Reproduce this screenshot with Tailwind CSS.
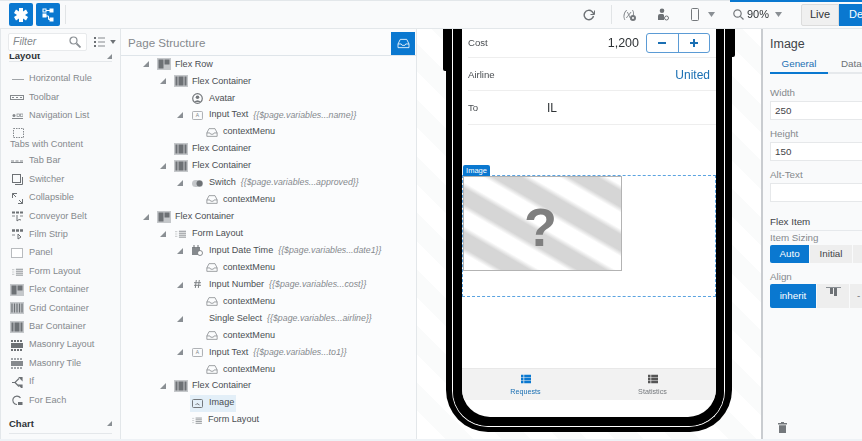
<!DOCTYPE html>
<html lang="en">
<head>
<meta charset="UTF-8">
<title>Page Designer</title>
<script src="https://cdn.jsdelivr.net/npm/@tailwindcss/browser@4"></script>
</head>
<body class="bg-[#eef2f6]">
<svg class="hidden">
  <symbol id="arrow" viewBox="0 0 7 7"><polygon points="7,0 7,7 0,7" fill="#8a8f94"/></symbol>
  <symbol id="flex" viewBox="0 0 14 12"><rect width="14" height="12" fill="#c4c7ca"/><rect x="1.5" y="1.5" width="5" height="9" fill="#6d7175"/><rect x="7.5" y="1.5" width="5" height="5" fill="#6d7175"/></symbol>
  <symbol id="bar" viewBox="0 0 14 12"><rect width="14" height="12" fill="#c4c7ca"/><rect x="1.5" y="1.5" width="2" height="9" fill="#6d7175"/><rect x="4.5" y="1.5" width="5" height="9" fill="#6d7175"/><rect x="10.5" y="1.5" width="2" height="9" fill="#6d7175"/></symbol>
  <symbol id="grid" viewBox="0 0 14 12"><rect width="14" height="12" fill="#c4c7ca"/><path d="M2 1.5v9M4.5 1.5v9M7 1.5v9M9.5 1.5v9M12 1.5v9" stroke="#6d7175" stroke-width="1.2"/></symbol>
  <symbol id="inbox" viewBox="0 0 14 12"><path d="M1 6.500 3.500 1.500h7L13 6.500v4H1zM1 6.500h3.500l1 1.500h3l1-1.500H13" fill="none" stroke="currentColor" stroke-width="0.9"/></symbol>
  <symbol id="form" viewBox="0 0 14 10"><path d="M0 2h3M0 5h3M0 8h3" stroke="#d0d2d4" stroke-width="1.4"/><path d="M5 1.500h9M5 4h9M5 6.500h9M5 9h9" stroke="#85898d" stroke-width="1.2"/></symbol>
  <symbol id="input" viewBox="0 0 12 10"><rect x="0.500" y="0.500" width="11" height="9" rx="1" fill="none" stroke="#a0a4a8"/><text x="6" y="7" font-size="5.500" text-anchor="middle" fill="#808488" font-family="Liberation Sans">A</text></symbol>
  <symbol id="list" viewBox="0 0 14 12"><path fill="currentColor" d="M0 0h3.500v3.500H0zM4.500 0H14v3.500H4.500zM0 4.300h3.500v3.500H0zM4.500 4.300H14v3.500H4.500zM0 8.600h3.500V12H0zM4.500 8.600H14V12H4.500z"/></symbol>
</svg>

<div class="w-[862px] h-[441px] overflow-hidden flex flex-col font-['Liberation_Sans',sans-serif] text-[#3f4347] blur-[0.35px]">
  <!-- toolbar -->
  <header class="relative h-[29px] shrink-0 flex items-center bg-[#f9fafb] border-t border-b border-[#e3e7ea] pl-[9px] [&>*]:shrink-0">
    <div class="absolute right-0 -top-px w-[132px] h-[2px] bg-[#0a78d0]"></div>
    <button class="w-[24px] h-[23px] bg-[#0a78d0] rounded-[2px] flex items-center justify-center">
      <svg class="w-[14px] h-[14px]" viewBox="0 0 14 14"><path fill="#fff" d="M5 0h4v3.500L12 1.500l2 3.500-3 2 3 2-2 3.500-3-2V14H5v-3.500L2 12.500 0 9l3-2-3-2 2-3.500 3 2z"/></svg>
    </button>
    <button class="ml-[3px] w-[24px] h-[23px] bg-[#0a78d0] rounded-[2px] flex items-center justify-center">
      <svg class="w-[13px] h-[14px]" viewBox="0 0 13 14" fill="none" stroke="#fff"><rect x="1" y="1" width="3" height="3"/><rect x="8" y="1" width="3" height="3" fill="#fff"/><rect x="1" y="6" width="3" height="3" fill="#fff"/><rect x="8" y="10" width="3" height="3" fill="#fff"/><path d="M4 8h2.500v3.500H8M4 2.500h4"/></svg>
    </button>
    <div class="ml-[5px] w-px h-[19px] bg-[#e1e4e6]"></div>

    <svg class="ml-[517px] w-[12px] h-[12px]" viewBox="0 0 12 12" fill="none" stroke="#6d7175" stroke-width="1.4"><path d="M10.500 7A4.700 4.700 0 1 1 9 2.500L11 5"/><path d="M11.500 1.500V5.500H7.500" stroke-width="1"/></svg>
    <div class="ml-[16px] w-px h-[19px] bg-[#e1e4e6]"></div>
    <span class="relative ml-[11px] w-[13px] text-[10px] italic text-[#85898d] leading-none">(x)<span class="absolute left-[7px] top-[5px] w-[6px] h-[6px] rounded-full border-2 border-[#74787c] bg-white"></span></span>
    <svg class="ml-[21px] w-[12px] h-[13px]" viewBox="0 0 12 13"><circle cx="5" cy="2.800" r="2.300" fill="#6d7175"/><path d="M1 12V8q0-2 2-2h3l1 1v5z" fill="#6d7175"/><circle cx="9.500" cy="10" r="2" fill="none" stroke="#6d7175"/></svg>
    <svg class="ml-[22px] w-[8px] h-[13px]" viewBox="0 0 8 13" fill="none" stroke="#74787c"><rect x="0.500" y="0.500" width="7" height="12" rx="1"/></svg>
    <svg class="ml-[9px] w-[7px] h-[5px]" viewBox="0 0 7 5"><polygon points="0,0 7,0 3.500,5" fill="#8a8f94"/></svg>
    <svg class="ml-[18px] w-[11px] h-[11px]" viewBox="0 0 11 11" fill="none" stroke="#74787c" stroke-width="1.200"><circle cx="4.500" cy="4.500" r="3.700"/><path d="M7.300 7.300 10.500 10.500"/></svg>
    <span class="ml-[3px] text-[11px] text-[#2f3336]">90%</span>
    <svg class="ml-[6px] w-[7px] h-[5px]" viewBox="0 0 7 5"><polygon points="0,0 7,0 3.500,5" fill="#8a8f94"/></svg>
    <div class="ml-[19px] w-[38px] h-[22px] bg-[#f0f0f0] border border-[#dcdcdc] rounded-l-[2px] flex items-center justify-center text-[11px] text-[#2f3336]">Live</div>
    <div class="w-[60px] h-[22px] bg-[#0a78d0] text-white text-[11px] flex items-center pl-[10px]">Design</div>
  </header>

  <main class="flex-1 min-h-0 flex mb-[2px]">
    <!-- component palette -->
    <aside class="w-[121px] shrink-0 bg-[#f9fafb] border-l border-[#e3e7ea] border-r relative overflow-hidden text-[9.200px] text-[#85898d]">
      <div class="flex items-center pl-[7px] pt-[4px]">
        <div class="w-[79px] h-[18px] bg-white border border-[#e8eaec] rounded-[2px] flex items-center justify-between pl-[4px] pr-[5px]">
          <span class="italic text-[10.500px] text-[#85898d]">Filter</span>
          <svg class="w-[12px] h-[12px]" viewBox="0 0 12 12" fill="none" stroke="#8a8f94" stroke-width="1.200"><circle cx="4.500" cy="4.500" r="3.500"/><path d="M7.500 7.500 11.500 11.500" stroke-width="1.800"/></svg>
        </div>
        <svg class="ml-[7px] w-[11px] h-[10px]" viewBox="0 0 11 10"><path d="M0 1h2M0 5h2M0 9h2" stroke="#6d7175" stroke-width="1.800"/><path d="M4 1h7M4 5h7M4 9h7" stroke="#85898d"/></svg>
        <svg class="ml-[5px] w-[6px] h-[4px]" viewBox="0 0 7 5"><polygon points="0,0 7,0 3.500,5" fill="#6d7175"/></svg>
      </div>
      <div class="mx-[8px] h-[8px] mt-[3px] border-b border-[#e4e7ea] flex items-end justify-between overflow-hidden">
        <span class="text-[9.500px] font-bold text-[#2f3336] leading-[8px] h-[8px] -translate-y-[1px]">Layout</span>
        <svg class="w-[5px] h-[5px] mb-[2px]"><use href="#arrow"/></svg>
      </div>
      <ul class="mt-[8px] -ml-px">
        <li class="h-[18.400px] flex items-center pl-[12px]"><span class="w-[17px] flex"><span class="w-[12px] h-px bg-[#a0a4a8]"></span></span>Horizontal Rule</li>
        <li class="h-[18.400px] flex items-center pl-[10px]"><svg class="w-[14px] h-[5px] mr-[5px]" viewBox="0 0 14 5"><rect x="0.500" y="0.500" width="13" height="4" fill="none" stroke="#85898d"/><path d="M2 2.500h2M6 2.500h2M10 2.500h2" stroke="#85898d"/></svg>Toolbar</li>
        <li class="h-[18.400px] flex items-center pl-[12px]"><svg class="w-[11px] h-[6px] mr-[6px]" viewBox="0 0 11 6"><path d="M0 5.500h11" stroke="#85898d"/><circle cx="2" cy="2.500" r="1.500" fill="#85898d"/><rect x="5" y="1" width="2.500" height="2.500" fill="none" stroke="#85898d" stroke-width="0.700"/><rect x="8.500" y="1" width="2.500" height="2.500" fill="none" stroke="#85898d" stroke-width="0.700"/></svg>Navigation List</li>
        <li class="h-[27px] relative">
          <svg class="absolute left-[13px] top-[3px] w-[11px] h-[10px]" viewBox="0 0 11 10"><rect x="0.500" y="0.500" width="10" height="9" fill="none" stroke="#85898d" stroke-dasharray="1.500 1"/></svg>
          <span class="absolute left-[10px] top-[13px]">Tabs with Content</span>
        </li>
        <li class="h-[18.400px] flex items-center pl-[11px]"><svg class="w-[12px] h-[4px] mr-[6px]" viewBox="0 0 12 4"><path d="M0 3.500h12" stroke="#85898d"/><path d="M0 2h3M4.500 2h3M9 2h3" stroke="#85898d"/></svg>Tab Bar</li>
        <li class="h-[18.400px] flex items-center pl-[12px]"><svg class="w-[11px] h-[11px] mr-[6px]" viewBox="0 0 11 11" fill="none" stroke="#6d7175"><rect x="0.500" y="0.500" width="8" height="8"/><path d="M10.500 3v7.500H3"/></svg>Switcher</li>
        <li class="h-[18.400px] flex items-center pl-[12px]"><svg class="w-[11px] h-[11px] mr-[6px]" viewBox="0 0 11 11" fill="none" stroke="#6d7175"><path d="M0.500 5V0.500H5M0.500 0.500 4 4M10.500 6v4.500H6M10.500 10.500 7 7"/></svg>Collapsible</li>
        <li class="h-[18.400px] flex items-center pl-[12px]"><svg class="w-[11px] h-[11px] mr-[6px]" viewBox="0 0 11 11"><path d="M0 1.500h3M4 1.500h3M8 1.500h3" stroke="#6d7175" stroke-width="2"/><path d="M0 5h3M8 5h3" stroke="#85898d"/><path d="M5 4v6l2-1.500 2 .5" fill="none" stroke="#6d7175"/></svg>Conveyor Belt</li>
        <li class="h-[18.400px] flex items-center pl-[12px]"><svg class="w-[11px] h-[11px] mr-[6px]" viewBox="0 0 11 11"><path d="M0 1.500h3M4 1.500h3M8 1.500h3" stroke="#6d7175" stroke-width="2.600"/><path d="M0 6h3" stroke="#85898d"/><path d="M6 5v5l3-2z" fill="none" stroke="#6d7175"/></svg>Film Strip</li>
        <li class="h-[18.400px] flex items-center pl-[11px]"><span class="w-[12px] h-[10px] mr-[6px] border border-[#b8bbbe] bg-white"></span>Panel</li>
        <li class="h-[18.400px] flex items-center pl-[12px]"><svg class="w-[11px] h-[8px] mr-[6px]"><use href="#form"/></svg>Form Layout</li>
        <li class="h-[18.400px] flex items-center pl-[10px]"><svg class="w-[14px] h-[12px] mr-[5px]"><use href="#flex"/></svg>Flex Container</li>
        <li class="h-[18.400px] flex items-center pl-[10px]"><svg class="w-[14px] h-[12px] mr-[5px]"><use href="#grid"/></svg>Grid Container</li>
        <li class="h-[18.400px] flex items-center pl-[10px]"><svg class="w-[14px] h-[12px] mr-[5px]"><use href="#bar"/></svg>Bar Container</li>
        <li class="h-[18.400px] flex items-center pl-[11px]"><svg class="w-[12px] h-[11px] mr-[6px]" viewBox="0 0 12 11"><path d="M0 1h12M0 10h12" stroke="#6d7175" stroke-width="2" stroke-dasharray="2 1"/><rect y="3" width="12" height="5" fill="#6d7175"/></svg>Masonry Layout</li>
        <li class="h-[18.400px] flex items-center pl-[11px]"><svg class="w-[12px] h-[11px] mr-[6px]" viewBox="0 0 12 11"><path d="M0 1h12M0 10h12" stroke="#a0a4a8" stroke-width="2" stroke-dasharray="2 1"/><rect y="3" width="12" height="5" fill="#85898d"/></svg>Masonry Tile</li>
        <li class="h-[18.400px] flex items-center pl-[12px]"><svg class="w-[11px] h-[11px] mr-[6px]" viewBox="0 0 11 11" fill="none" stroke="#6d7175" stroke-width="1.200"><path d="M0 5.500h3l4-4M3 5.500l4 4"/><path d="M7 0h3v3zM7 8h3v3z" fill="#6d7175"/></svg>If</li>
        <li class="h-[18.400px] flex items-center pl-[11px]"><svg class="w-[12px] h-[11px] mr-[6px]" viewBox="0 0 12 11" fill="none" stroke="#6d7175" stroke-width="1.200"><path d="M9.500 3A4.200 4.200 0 1 0 6 9.500"/><rect x="7" y="7" width="4.500" height="3" fill="#6d7175" stroke="none"/></svg>For Each</li>
      </ul>
      <div class="mx-[8px] mt-[7px] pb-[2px] border-b border-[#e4e7ea] flex items-center justify-between">
        <span class="font-bold text-[9.500px] text-[#2f3336]">Chart</span>
        <svg class="w-[5px] h-[5px]"><use href="#arrow"/></svg>
      </div>
    </aside>

    <!-- page structure tree -->
    <section class="w-[296px] shrink-0 bg-[#fbfcfd] border-r border-[#e3e7ea] text-[#4a4e52]">
      <div class="h-[27px] pt-[2px] flex items-center justify-between border-b border-[#dfe5ea] pl-[7px] pr-[1px]">
        <h2 class="text-[11.600px] text-[#85898d] font-normal">Page Structure</h2>
        <button class="w-[24px] h-[23px] bg-[#0a78d0] flex items-center justify-center text-white"><svg class="w-[13px] h-[11px]"><use href="#inbox"/></svg></button>
      </div>
      <ul class="text-[9.100px] [&>li]:h-[16.950px] [&>li]:flex [&>li]:items-center [&_i]:ml-[5px] [&_i]:text-[8.800px] [&_i]:text-[#85898d]">
        <li class="pl-[22px]"><svg class="w-[6px] h-[6px] mr-[8px]"><use href="#arrow"/></svg><svg class="w-[14px] h-[12px] mr-[4px]"><use href="#flex"/></svg>Flex Row</li>
        <li class="pl-[39px]"><svg class="w-[6px] h-[6px] mr-[8px]"><use href="#arrow"/></svg><svg class="w-[14px] h-[12px] mr-[4px]"><use href="#bar"/></svg>Flex Container</li>
        <li class="pl-[71px]"><svg class="w-[11px] h-[11px] mr-[6px]" viewBox="0 0 11 11"><circle cx="5.500" cy="5.500" r="4.800" fill="none" stroke="#74787c" stroke-width="1.200"/><circle cx="5.500" cy="4.200" r="1.800" fill="#74787c"/><path d="M2 9q3.500-3.500 7 0" fill="#74787c"/></svg>Avatar</li>
        <li class="pl-[56px]"><svg class="w-[6px] h-[6px] mr-[9px]"><use href="#arrow"/></svg><svg class="w-[11px] h-[9px] mr-[6px]"><use href="#input"/></svg>Input Text <i>{{$page.variables...name}}</i></li>
        <li class="pl-[85px]"><svg class="w-[12px] h-[11px] mr-[5px] text-[#85898d]"><use href="#inbox"/></svg>contextMenu</li>
        <li class="pl-[53px]"><svg class="w-[14px] h-[12px] mr-[4px]"><use href="#bar"/></svg>Flex Container</li>
        <li class="pl-[39px]"><svg class="w-[6px] h-[6px] mr-[8px]"><use href="#arrow"/></svg><svg class="w-[14px] h-[12px] mr-[4px]"><use href="#bar"/></svg>Flex Container</li>
        <li class="pl-[56px]"><svg class="w-[6px] h-[6px] mr-[9px]"><use href="#arrow"/></svg><svg class="w-[11px] h-[7px] mr-[6px]" viewBox="0 0 11 7"><rect width="11" height="7" rx="3.500" fill="#c4c7ca"/><circle cx="7.500" cy="3.500" r="3" fill="#6d7175"/></svg>Switch <i>{{$page.variables...approved}}</i></li>
        <li class="pl-[85px]"><svg class="w-[12px] h-[11px] mr-[5px] text-[#85898d]"><use href="#inbox"/></svg>contextMenu</li>
        <li class="pl-[22px]"><svg class="w-[6px] h-[6px] mr-[8px]"><use href="#arrow"/></svg><svg class="w-[14px] h-[12px] mr-[4px]"><use href="#flex"/></svg>Flex Container</li>
        <li class="pl-[39px]"><svg class="w-[6px] h-[6px] mr-[9px]"><use href="#arrow"/></svg><svg class="w-[11px] h-[8px] mr-[6px]"><use href="#form"/></svg>Form Layout</li>
        <li class="pl-[56px]"><svg class="w-[6px] h-[6px] mr-[9px]"><use href="#arrow"/></svg><svg class="w-[11px] h-[11px] mr-[6px]" viewBox="0 0 11 11"><rect y="2" width="8" height="8" fill="#85898d"/><path d="M2 0v3M6 0v3" stroke="#6d7175"/><circle cx="8" cy="8" r="2.500" fill="#fff" stroke="#6d7175" stroke-width="0.800"/></svg>Input Date Time <i>{{$page.variables...date1}}</i></li>
        <li class="pl-[85px]"><svg class="w-[12px] h-[11px] mr-[5px] text-[#85898d]"><use href="#inbox"/></svg>contextMenu</li>
        <li class="pl-[56px]"><svg class="w-[6px] h-[6px] mr-[11px]"><use href="#arrow"/></svg><svg class="w-[7px] h-[8px] mr-[8px] -translate-y-[1px]" viewBox="0 0 7 8" fill="none" stroke="#74787c" stroke-width="0.900"><path d="M2.300 0 1.300 8M5.300 0l-1 8M0 2.700h7M0 5.300h7"/></svg>Input Number <i>{{$page.variables...cost}}</i></li>
        <li class="pl-[85px]"><svg class="w-[12px] h-[11px] mr-[5px] text-[#85898d]"><use href="#inbox"/></svg>contextMenu</li>
        <li class="pl-[56px]"><svg class="w-[6px] h-[6px] mr-[26px]"><use href="#arrow"/></svg>Single Select <i>{{$page.variables...airline}}</i></li>
        <li class="pl-[85px]"><svg class="w-[12px] h-[11px] mr-[5px] text-[#85898d]"><use href="#inbox"/></svg>contextMenu</li>
        <li class="pl-[56px]"><svg class="w-[6px] h-[6px] mr-[9px]"><use href="#arrow"/></svg><svg class="w-[11px] h-[9px] mr-[6px]"><use href="#input"/></svg>Input Text <i>{{$page.variables...to1}}</i></li>
        <li class="pl-[85px]"><svg class="w-[12px] h-[11px] mr-[5px] text-[#85898d]"><use href="#inbox"/></svg>contextMenu</li>
        <li class="pl-[39px]"><svg class="w-[6px] h-[6px] mr-[8px]"><use href="#arrow"/></svg><svg class="w-[14px] h-[12px] mr-[4px]"><use href="#bar"/></svg>Flex Container</li>
        <li class="pl-[69px]"><span class="flex items-center h-[17px] w-[46px] bg-[#e3eff8] pl-[2px]"><svg class="w-[11px] h-[9px] mr-[6px]" viewBox="0 0 11 9" fill="none" stroke="#74787c"><rect x="0.500" y="0.500" width="10" height="8" rx="1"/><path d="M3.500 6 5 4.500 7.500 6"/></svg>Image</span></li>
        <li class="pl-[71px]"><svg class="w-[10px] h-[7px] mr-[6px]"><use href="#form"/></svg>Form Layout</li>
      </ul>
    </section>

    <!-- canvas with the phone frame -->
    <section class="flex-1 min-w-0 relative overflow-hidden bg-[repeating-linear-gradient(45deg,#ffffff_0,#ffffff_20px,#fafbfb_20px,#fafbfb_40px)] pl-[29px]">
      <span class="absolute left-[26px] top-0 w-[4px] h-[42px] bg-black rounded-bl-[2px]"></span>
      <span class="absolute left-[314px] top-0 w-[4px] h-[28px] bg-black rounded-br-[2px]"></span>
      <div class="w-[286px] h-[403px] bg-black rounded-b-[42px] pl-[6px] pr-[7px] pb-[5px]">
        <div class="h-full border-x border-b border-white rounded-b-[36px]">
          <div class="h-full bg-black pl-[9px] pr-[8px] pb-[9px] rounded-b-[35px]">
            <div class="relative h-full bg-white rounded-b-[28px] flex flex-col overflow-hidden text-[9.600px] text-[#4a4e52]">
              <div class="h-[29px] ml-[6px] flex items-center border-b border-[#eeeeee] pr-[6px] shrink-0">
                <span class="mt-[1px]">Cost</span>
                <span class="ml-auto text-[12.500px] text-[#2f3336]">1,200</span>
                <div class="ml-[7px] w-[64px] h-[20px] flex border border-[#5b9bd5] rounded-[3px] text-[#1a6fb3]">
                  <span class="flex-1 border-r border-[#5b9bd5] flex items-center justify-center"><span class="w-[8px] h-[1.500px] bg-[#1a6fb3]"></span></span>
                  <span class="flex-1 relative flex items-center justify-center"><span class="w-[8px] h-[1.500px] bg-[#1a6fb3]"></span><span class="absolute w-[1.500px] h-[8px] bg-[#1a6fb3]"></span></span>
                </div>
              </div>
              <div class="h-[33px] ml-[6px] pt-[1px] flex items-center justify-between border-b border-[#eeeeee] pr-[6px] shrink-0">
                <span class="mt-[1px]">Airline</span><span class="text-[12px] text-[#1a6fb3]">United</span>
              </div>
              <div class="h-[34px] ml-[6px] pt-[1px] flex items-center border-b border-[#eeeeee] shrink-0">
                <span class="w-[79px]">To</span><span class="text-[12px] text-[#2f3336]">IL</span>
              </div>
              <div class="relative mt-[50px] h-[122px] border border-dashed border-[#5aa3e0] shrink-0">
                <span class="absolute left-0 -top-[11px] w-[27px] h-[11px] bg-[#0a78d0] rounded-t-[2px] text-white text-[7.500px] leading-[11px] text-center">Image</span>
                <div class="w-[159px] h-[95px] border-r border-b border-[#b3b3b3] border-t border-l flex items-center justify-center bg-[repeating-linear-gradient(30deg,#ffffff_0,#ffffff_14px,#d6d6d6_19px,#d6d6d6_33px,#ffffff_38px)]">
                  <span class="mt-[6px] -ml-[4px] text-[54px] font-bold leading-none text-[#7f7f7f]">?</span>
                </div>
              </div>
              <nav class="mt-auto mb-[17px] h-[32px] bg-[#f2f2f2] border-t border-[#e8e8e8] flex shrink-0 text-[7.200px]">
                <div class="flex-1 flex flex-col items-center pt-[5px] text-[#1a6fb3]"><svg class="w-[10px] h-[10px] text-[#0a78d0] mb-[3px]"><use href="#list"/></svg>Requests</div>
                <div class="flex-1 flex flex-col items-center pt-[5px] text-[#74787c]"><svg class="w-[10px] h-[10px] text-[#555] mb-[3px]"><use href="#list"/></svg>Statistics</div>
              </nav>
            </div>
          </div>
        </div>
      </div>
    </section>

    <!-- property inspector -->
    <aside class="w-[101px] shrink-0 relative overflow-hidden bg-[#f9fafb] border-l-2 border-[#c9ccd0] pl-[7px] text-[9.800px] text-[#85898d]">
      <h3 class="mt-[8px] text-[12.500px] leading-[15px] text-[#3f4347]">Image</h3>
      <div class="mt-[4px] w-[200px] border-b-2 border-[#e6e9ec] flex h-[18px]">
        <span class="w-[58px] -mb-[2px] border-b-2 border-[#0a78d0] text-center text-[#1a6fb3] leading-[15px]">General</span>
        <span class="ml-[13px] text-[#6d7175] leading-[15px]">Data</span>
      </div>
      <label class="block mt-[13px] leading-[12px]">Width</label>
      <div class="mt-[2px] w-[200px] h-[19px] bg-white border border-[#e6e8ea] text-[#3f4347] pl-[4px] leading-[17px]">250</div>
      <label class="block mt-[8px] leading-[12px]">Height</label>
      <div class="mt-[2px] w-[200px] h-[19px] bg-white border border-[#e6e8ea] text-[#3f4347] pl-[4px] leading-[17px]">150</div>
      <label class="block mt-[8px] leading-[12px]">Alt-Text</label>
      <div class="mt-[2px] w-[200px] h-[19px] bg-white border border-[#e6e8ea]"></div>
      <div class="mt-[13px] w-[200px] border-b border-[#e6e9ec] text-[#3f4347] leading-[14px] pb-[1px]">Flex Item</div>
      <label class="block leading-[13px]">Item Sizing</label>
      <div class="mt-[1px] flex h-[18px] w-[200px] text-[#3f4347]">
        <span class="w-[39px] bg-[#0a78d0] text-white rounded-l-[2px] flex items-center justify-center">Auto</span>
        <span class="ml-px w-[42px] bg-[#eeeeee] flex items-center justify-center">Initial</span>
        <span class="ml-px w-[40px] bg-[#eeeeee]"></span>
      </div>
      <label class="block mt-[8px] leading-[12px]">Align</label>
      <div class="mt-[1px] flex h-[24px] w-[200px]">
        <span class="w-[46px] bg-[#0a78d0] text-white rounded-l-[2px] flex items-center justify-center">inherit</span>
        <span class="ml-px w-[32px] bg-[#eeeeee] flex justify-center"><svg class="w-[15px] h-[9px] mt-[3px]" viewBox="0 0 15 9"><path d="M0 .5h15" stroke="#8a8f94"/><rect x="4" y="1" width="3" height="6" fill="#6d7175"/><rect x="8" y="1" width="3" height="8" fill="#6d7175"/></svg></span>
        <span class="ml-px w-[40px] bg-[#eeeeee] flex items-center pl-[7px] text-[#6d7175]">-</span>
      </div>
      <svg class="absolute left-[15px] bottom-[6px] w-[9px] h-[11px]" viewBox="0 0 9 11"><path fill="#74787c" d="M3 0h3v1h3v1.500H0V1h3zM1 3.200h7V11H1z"/></svg>
    </aside>
  </main>
</div>
</body>
</html>
